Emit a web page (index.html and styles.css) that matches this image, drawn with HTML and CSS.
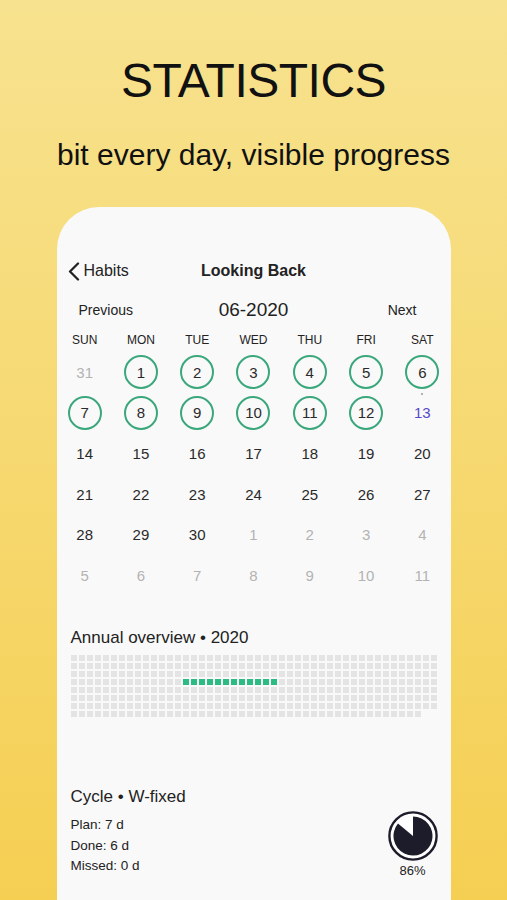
FILE: index.html
```html
<!DOCTYPE html>
<html lang="en">
<head>
<meta charset="utf-8">
<meta name="viewport" content="width=device-width,initial-scale=1">
<title>Statistics</title>
<link rel="stylesheet" href="styles.css">
</head>
<body>
<main class="page">
	<h1 class="headline">STATISTICS</h1>
	<p class="tagline">bit every day, visible progress</p>
	<section class="phone">
		<nav class="topbar">
			<a class="back">
				<svg width="12" height="19" viewBox="0 0 12 19"><polyline points="10,1.5 2,9.5 10,17.5" fill="none" stroke="#222" stroke-width="2.3" stroke-linecap="round" stroke-linejoin="round"/></svg>
				Habits
			</a>
			<span class="title">Looking Back</span>
		</nav>
		<div class="monthbar">
			<span class="prev">Previous</span>
			<span class="month">06-2020</span>
			<span class="next">Next</span>
		</div>
		<div class="weekdays">
			<span>SUN</span><span>MON</span><span>TUE</span><span>WED</span><span>THU</span><span>FRI</span><span>SAT</span>
		</div>
		<div class="days" id="days"></div>
		<h2 class="section">Annual overview • 2020</h2>
		<div class="year" id="year"></div>
		<div class="cycle">
			<div class="cycle-info">
				<h2 class="section">Cycle • W-fixed</h2>
				<p>Plan: 7 d</p>
				<p>Done: 6 d</p>
				<p>Missed: 0 d</p>
			</div>
			<div class="pie">
				<svg width="50" height="50" viewBox="0 0 50 50">
					<circle cx="25" cy="25" r="23.6" fill="#fff" stroke="#1d1c2b" stroke-width="2.4"/>
					<path d="M25 25 L25 5.5 A19.5 19.5 0 1 1 9.98 12.57 Z" fill="#1d1c2b"/>
				</svg>
				<span>86%</span>
			</div>
		</div>
	</section>
</main>
<script>
	const days=document.getElementById('days');
	const cells=[];
	cells.push(['31','other']);
	for(let d=1;d<=30;d++){
		cells.push([String(d),d<=12?'done':(d==13?'today':'')]);
	}
	for(let d=1;d<=11;d++){
		cells.push([String(d),'other']);
	}
	cells.forEach(c=>{
		const s=document.createElement('span');
		s.className='day '+c[1];
		s.textContent=c[0];
		days.appendChild(s);
	});
	const year=document.getElementById('year');
	for(let i=0;i<366;i++){
		const b=document.createElement('i');
		if(i>=152&&i<164){
			b.className='on';
		}
		year.appendChild(b);
	}
</script>
</body>
</html>
```

FILE: styles.css
```css
html,body{
	margin:0;
	height:900px;
	overflow:hidden;
}
body{
	background:linear-gradient(#f7e28f,#f5cf52);
	color:#111;
	font-family:'Liberation Sans',Arial,sans-serif;
}
.page{
	align-items:center;
	display:flex;
	flex-direction:column;
}
.headline{
	font-size:48px;
	font-weight:400;
	letter-spacing:-0.5px;
	line-height:50px;
	margin:56px 0 0;
}
.tagline{
	font-size:30px;
	line-height:34px;
	margin:32px 0 0;
}
.phone{
	background:#f9f9f9;
	border-radius:42px 42px 0 0;
	box-sizing:border-box;
	color:#222;
	height:700px;
	margin-top:35px;
	padding-top:48px;
	width:394px;
}
.topbar{
	align-items:center;
	display:grid;
	grid-template-columns:1fr auto 1fr;
	height:32px;
}
.back{
	align-items:center;
	display:flex;
	font-size:16px;
	gap:4px;
	padding-left:11px;
}
.title{
	font-size:16px;
	font-weight:700;
}
.monthbar{
	align-items:center;
	display:grid;
	grid-template-columns:1fr auto 1fr;
	height:28px;
	margin-top:9px;
}
.prev{
	font-size:14px;
	padding-left:22px;
}
.month{
	font-size:19px;
}
.next{
	font-size:14px;
	justify-self:end;
	padding-right:34px;
}
.weekdays{
	display:grid;
	font-size:12px;
	grid-template-columns:repeat(7,1fr);
	height:20px;
	line-height:20px;
	margin-top:6px;
	text-align:center;
}
.days{
	display:grid;
	grid-auto-rows:40.6px;
	grid-template-columns:repeat(7,1fr);
	margin-top:2px;
}
.day{
	align-items:center;
	color:#2a2a2a;
	display:flex;
	font-size:15px;
	justify-content:center;
	position:relative;
}
.day.other{
	color:#b3b3b3;
}
.day.done::before{
	border:2px solid #3ba77c;
	border-radius:50%;
	content:'';
	height:30px;
	position:absolute;
	width:30px;
}
.day.today{
	color:#5548c8;
}
.day.today::after{
	background:#999;
	border-radius:50%;
	content:'';
	height:2px;
	position:absolute;
	top:0;
	width:2px;
}
.section{
	font-size:17px;
	font-weight:400;
	line-height:22px;
	margin:31px 0 0 14px;
}
.year{
	display:grid;
	gap:1.5px;
	grid-template-columns:repeat(46,6.5px);
	grid-auto-rows:6.5px;
	margin:6px 0 0 14px;
}
.year i{
	background:#e4e4e4;
}
.year i.on{
	background:#2dbb84;
}
.cycle{
	display:flex;
	justify-content:space-between;
	margin-top:69px;
	padding-right:13px;
}
.cycle .section{
	margin-top:0;
}
.cycle-info p{
	font-size:13.5px;
	line-height:20.5px;
	margin:0 0 0 14px;
}
.cycle-info p:first-of-type{
	margin-top:7px;
}
.pie{
	align-items:center;
	display:flex;
	flex-direction:column;
	font-size:13px;
	padding-top:25px;
}
.pie span{
	line-height:16px;
	margin-top:2px;
}
```
